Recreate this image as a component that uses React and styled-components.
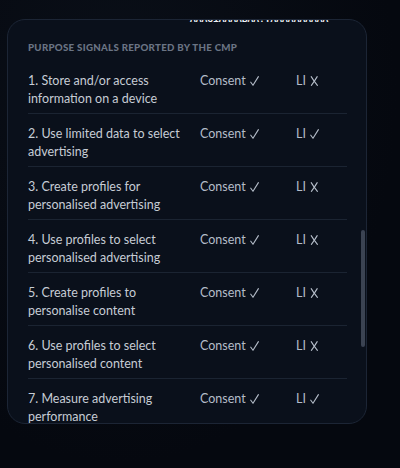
import React from 'react';
import styled, { createGlobalStyle } from 'styled-components';

const GlobalStyle = createGlobalStyle`
  html, body {
    margin: 0;
    padding: 0;
    background: #05080f;
  }
  body {
    font-family: 'Lato', 'Liberation Sans', sans-serif;
  }
`;

const Page = styled.div`
  width: 400px;
  height: 468px;
  padding: 19px 0 0 7px;
  box-sizing: border-box;
  background: radial-gradient(ellipse at 30% 20%, #0a0f18 0%, #05080f 70%);
`;

const Card = styled.div`
  position: relative;
  width: 360px;
  height: 405px;
  box-sizing: border-box;
  border: 1px solid #1c2535;
  border-radius: 18px;
  background: #0a101b;
  overflow: hidden;
`;

const Scroller = styled.div`
  position: relative;
  height: 100%;
  overflow-y: auto;
  scrollbar-width: none;

  &::-webkit-scrollbar {
    display: none;
  }
`;

// scroll indicator drawn over the panel edge
const Thumb = styled.div`
  position: absolute;
  right: 1px;
  width: 4px;
  border-radius: 2px;
  background: rgba(92, 102, 120, 0.6);
`;

const Content = styled.div`
  padding: 20px 19px 2px 20px;
`;

const ValueRow = styled.div`
  display: grid;
  grid-template-columns: 150px 1fr;
  column-gap: 12px;
  margin-bottom: 14px;
`;

const Key = styled.div`
  font-size: 12px;
  line-height: 16px;
  color: #8a93a2;
`;

const Mono = styled.div`
  width: 24ch;
  font-family: 'Liberation Mono', 'DejaVu Sans Mono', monospace;
  font-size: 9.6px;
  line-height: 13px;
  font-weight: 700;
  color: #eef1f6;
  word-break: break-all;
`;

const Heading = styled.h3`
  margin: 0 0 7px;
  font-family: 'Lato', 'Liberation Sans', sans-serif;
  font-size: 9.7px;
  line-height: 14px;
  font-weight: 900;
  letter-spacing: 0.03em;
  text-transform: uppercase;
  color: #6a7484;
`;

const PurposeRow = styled.div`
  display: grid;
  grid-template-columns: 156px 80px 1fr;
  column-gap: 16px;
  padding: 11px 0 5px;
  font-size: 12.5px;
  line-height: 18px;

  & + & {
    border-top: 1px solid #1b2432;
  }
`;

const Label = styled.div`
  color: #c6ccd5;
`;

const Signal = styled.div`
  color: #b4bcc8;
  white-space: nowrap;
`;

const MarkIcon = styled.svg`
  width: 9px;
  height: 10px;
  margin-left: 4px;
  vertical-align: -1px;
  fill: none;
  stroke: currentColor;
  stroke-width: 1.1;
  stroke-linecap: round;
  stroke-linejoin: round;
`;

const Mark = ({ on }) =>
  on ? (
    <MarkIcon viewBox="0 0 9 10">
      <path d="M0.8 6.2 L3 9.3 L8.4 0.6" />
    </MarkIcon>
  ) : (
    <MarkIcon viewBox="0 0 9 10">
      <path d="M1.2 0.6 Q3.6 4.6 7.4 9.4" />
      <path d="M7.2 0.6 Q4.6 5 1.4 9.4" />
    </MarkIcon>
  );

// 54 lines of 24 characters, last line is the one peeking at the top
const TC_LINES = 54;
const tcHead =
  'CQKx3sAQKx3sAAHABBENBOFgAPxgAAAAAAYgJNNXxGxxbWljx73afu0cY1X9xh7rsQxBhfJk4FzLuWxJwX32E7NAzatsIK' +
  'mRIAu3TBIQNlGJDURVCgaogVrzDMaEyfoTNKJ6BkiFMRY2dYCFxvm4pjWQCZ4vrxdMxdmt9dvdhX8edxhV7vxAf6fxCcz';
const tcTail = 'AAAC1AAAABAA.YAAAAAAAAAA';
const tcString = tcHead + 'A'.repeat(24 * TC_LINES - tcHead.length - tcTail.length) + tcTail;

const purposes = [
  ['1. Store and/or access information on a device', true, false],
  ['2. Use limited data to select advertising', true, true],
  ['3. Create profiles for personalised advertising', true, false],
  ['4. Use profiles to select personalised advertising', true, false],
  ['5. Create profiles to personalise content', true, false],
  ['6. Use profiles to select personalised content', true, false],
  ['7. Measure advertising performance', true, true],
  ['8. Measure content performance', true, true],
  ['9. Understand audiences through statistics or combinations of data from different sources', true, true],
  ['10. Develop and improve services', true, true],
  ['11. Use limited data to select content', true, true],
];

function App() {
  const scrollRef = React.useRef(null);
  const headingRef = React.useRef(null);
  const [thumb, setThumb] = React.useState({ top: 0, height: 0 });

  const updateThumb = () => {
    const el = scrollRef.current;
    if (!el) return;
    const ratio = el.clientHeight / el.scrollHeight;
    const height = el.clientHeight * ratio;
    const max = el.scrollHeight - el.clientHeight;
    const top = max > 0 ? (el.scrollTop / max) * (el.clientHeight - height) : 0;
    setThumb({ top, height });
  };

  React.useLayoutEffect(() => {
    if (scrollRef.current && headingRef.current) {
      scrollRef.current.scrollTop = headingRef.current.offsetTop - 20;
    }
    updateThumb();
  }, []);

  return (
    <>
      <GlobalStyle />
      <Page>
        <Card>
          <Scroller ref={scrollRef} onScroll={updateThumb}>
            <Content>
              <ValueRow>
                <Key>TC string</Key>
                <Mono>{tcString}</Mono>
              </ValueRow>
              <Heading ref={headingRef}>Purpose signals reported by the CMP</Heading>
              {purposes.map(([label, consent, li]) => (
                <PurposeRow key={label}>
                  <Label>{label}</Label>
                  <Signal>
                    Consent
                    <Mark on={consent} />
                  </Signal>
                  <Signal>
                    LI
                    <Mark on={li} />
                  </Signal>
                </PurposeRow>
              ))}
            </Content>
          </Scroller>
          {thumb.height > 0 && <Thumb style={{ top: thumb.top, height: thumb.height }} />}
        </Card>
      </Page>
    </>
  );
}

export default App;
